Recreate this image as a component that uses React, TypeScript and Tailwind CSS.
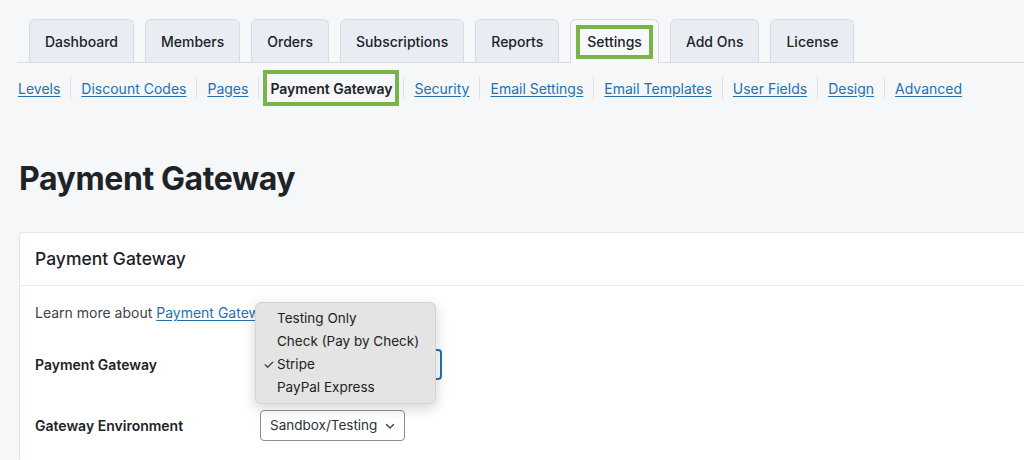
import React from "react";

const tabs = ["Dashboard", "Members", "Orders", "Subscriptions", "Reports", "Settings", "Add Ons", "License"];
const subLinks = [
  "Levels",
  "Discount Codes",
  "Pages",
  "Payment Gateway",
  "Security",
  "Email Settings",
  "Email Templates",
  "User Fields",
  "Design",
  "Advanced",
];
const gateways = ["Testing Only", "Check (Pay by Check)", "Stripe", "PayPal Express"];

function Chevron() {
  return (
    <svg width="12" height="12" viewBox="0 0 12 12" fill="none" className="ml-[7px] shrink-0">
      <path d="M2.5 4.5 6 8l3.5-3.5" stroke="#3c434a" strokeWidth="1.4" strokeLinecap="round" strokeLinejoin="round" />
    </svg>
  );
}

export default function App() {
  return (
    <div
      className="w-[1024px] h-[460px] overflow-hidden bg-[#f6f7f9] text-[#1d2327] pl-[17px]"
      style={{ fontFamily: "Inter, 'Noto Sans', sans-serif" }}
    >
      {/* ── Top tabs ── */}
      <div className="flex items-end gap-[11px] pl-[12px] pt-[19px] border-b border-[#d7dce3]">
        {tabs.map((t) =>
          t === "Settings" ? (
            <div
              key={t}
              className="h-[44px] -mb-px px-[5px] flex items-center bg-[#f7f8fa] border border-b-0 border-[#d7dce3] rounded-t-[6px]"
            >
              <span className="h-[34px] px-[7px] flex items-center border-4 border-[#79b546] text-[14px] font-medium">
                {t}
              </span>
            </div>
          ) : (
            <div
              key={t}
              className="h-[43px] px-[15px] flex items-center bg-[#e9edf3] border border-b-0 border-[#d7dce3] rounded-t-[6px] text-[14px] font-medium"
            >
              {t}
            </div>
          )
        )}
      </div>

      {/* ── Sub navigation ── */}
      <div className="flex items-center h-[36px] mt-[7px] text-[14px]">
        {subLinks.map((l, i) => (
          <React.Fragment key={l}>
            {i > 0 && <span className="w-px h-[22px] bg-[#dcdfe3] mx-[10px]" />}
            {l === "Payment Gateway" ? (
              <span className="h-[36px] px-[3px] flex items-center border-4 border-[#79b546] font-semibold text-[#1d2327] -mx-[6px]">
                {l}
              </span>
            ) : (
              <a className="text-[#2271b1] underline underline-offset-[2px] first:ml-px">{l}</a>
            )}
          </React.Fragment>
        ))}
      </div>

      {/* ── Title ── */}
      <h1 className="mt-[53px] ml-[2px] text-[32px] leading-[40px] font-bold tracking-[-0.4px]">Payment Gateway</h1>

      {/* ── Card ── */}
      <div className="mt-[33px] ml-[2px] bg-white border border-[#e3e5e8] rounded-l-[4px] border-r-0">
        <div className="h-[53px] px-[15px] flex items-center border-b border-[#e9ebee] text-[17.5px] font-medium">
          Payment Gateway
        </div>
        <div className="px-[15px] pt-[17px] pb-[20px] text-[14px] text-[#3c434a]">
          <p className="leading-[20px]">
            Learn more about{" "}
            <a className="text-[#2271b1] underline underline-offset-[2px]">Payment Gateway and SSL Settings</a>.
          </p>

          <div className="grid grid-cols-[225px_1fr] items-center gap-y-[30px] mt-[26px]">
            <div className="font-semibold text-[#1d2327]">Payment Gateway</div>
            <div className="relative w-[182px] h-[31px] border-2 border-[#2271b1] rounded-[4px] bg-white">
              {/* ── Native dropdown menu ── */}
              <div className="absolute -top-[49px] -left-[7px] w-[181px] h-[102px] bg-[#e4e4e4] rounded-[6px] border border-[#d3d3d3] shadow-[0_4px_14px_rgba(0,0,0,0.18)] pt-[4px] text-[13.5px] text-[#222]">
                {gateways.map((g) => (
                  <div key={g} className="relative h-[23px] flex items-center pl-[21px]">
                    {g === "Stripe" && <span className="absolute left-[7px] text-[13px]">✓</span>}
                    {g}
                  </div>
                ))}
              </div>
            </div>

            <div className="font-semibold text-[#1d2327]">Gateway Environment</div>
            <div className="w-[145px] h-[31px] px-[9px] flex items-center border border-[#8c8f94] rounded-[4px] bg-white text-[13.5px] text-[#2c3338] whitespace-nowrap">
              Sandbox/Testing
              <Chevron />
            </div>
          </div>
        </div>
      </div>
    </div>
  );
}
